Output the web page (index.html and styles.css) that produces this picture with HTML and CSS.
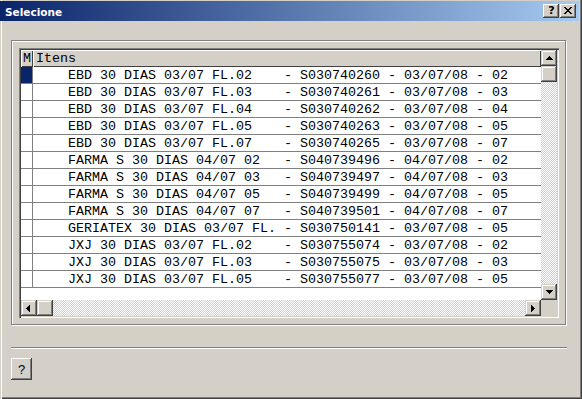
FILE: index.html
```html
<!DOCTYPE html>
<html>
<head>
<meta charset="utf-8">
<link rel="stylesheet" href="styles.css">
</head>
<body>
<div class="window">
  <div class="titlebar">
    <span class="title">Selecione</span>
    <div class="tb-buttons">
      <div class="tb-btn tb-help">?</div>
      <div class="tb-btn">
        <svg width="16" height="14" viewBox="0 0 16 14" shape-rendering="crispEdges">
          <g fill="#000">
            <rect x="4" y="3" width="2" height="1"/><rect x="10" y="3" width="2" height="1"/>
            <rect x="5" y="4" width="2" height="1"/><rect x="9" y="4" width="2" height="1"/>
            <rect x="6" y="5" width="4" height="1"/>
            <rect x="7" y="6" width="2" height="1"/>
            <rect x="6" y="7" width="4" height="1"/>
            <rect x="5" y="8" width="2" height="1"/><rect x="9" y="8" width="2" height="1"/>
            <rect x="4" y="9" width="2" height="1"/><rect x="10" y="9" width="2" height="1"/>
          </g>
        </svg>
      </div>
    </div>
  </div>
  <div class="client">
    <div class="frame">
      <div class="grid">
        <div class="list">
          <div class="head">
            <div class="hcell hm">M</div>
            <div class="hcell hi">Itens</div>
          </div>
          <div class="row sel"><div class="cm"></div><div class="ci">    EBD 30 DIAS 03/07 FL.02    - S030740260 - 03/07/08 - 02</div></div>
          <div class="row"><div class="cm"></div><div class="ci">    EBD 30 DIAS 03/07 FL.03    - S030740261 - 03/07/08 - 03</div></div>
          <div class="row"><div class="cm"></div><div class="ci">    EBD 30 DIAS 03/07 FL.04    - S030740262 - 03/07/08 - 04</div></div>
          <div class="row"><div class="cm"></div><div class="ci">    EBD 30 DIAS 03/07 FL.05    - S030740263 - 03/07/08 - 05</div></div>
          <div class="row"><div class="cm"></div><div class="ci">    EBD 30 DIAS 03/07 FL.07    - S030740265 - 03/07/08 - 07</div></div>
          <div class="row"><div class="cm"></div><div class="ci">    FARMA S 30 DIAS 04/07 02   - S040739496 - 04/07/08 - 02</div></div>
          <div class="row"><div class="cm"></div><div class="ci">    FARMA S 30 DIAS 04/07 03   - S040739497 - 04/07/08 - 03</div></div>
          <div class="row"><div class="cm"></div><div class="ci">    FARMA S 30 DIAS 04/07 05   - S040739499 - 04/07/08 - 05</div></div>
          <div class="row"><div class="cm"></div><div class="ci">    FARMA S 30 DIAS 04/07 07   - S040739501 - 04/07/08 - 07</div></div>
          <div class="row"><div class="cm"></div><div class="ci">    GERIATEX 30 DIAS 03/07 FL. - S030750141 - 03/07/08 - 05</div></div>
          <div class="row"><div class="cm"></div><div class="ci">    JXJ 30 DIAS 03/07 FL.02    - S030755074 - 03/07/08 - 02</div></div>
          <div class="row"><div class="cm"></div><div class="ci">    JXJ 30 DIAS 03/07 FL.03    - S030755075 - 03/07/08 - 03</div></div>
          <div class="row"><div class="cm"></div><div class="ci">    JXJ 30 DIAS 03/07 FL.05    - S030755077 - 03/07/08 - 05</div></div>
        </div>
        <div class="vscroll">
          <div class="sbtn">
            <svg width="16" height="16" viewBox="0 0 16 16" shape-rendering="crispEdges"><path d="M8 6h1v1h1v1h1v1h1v1H5V9h1V8h1V7h1z" fill="#000"/></svg>
          </div>
          <div class="sbtn"></div>
          <div class="track"></div>
          <div class="sbtn">
            <svg width="16" height="16" viewBox="0 0 16 16" shape-rendering="crispEdges"><path d="M5 6h7v1h-1v1h-1v1h-1v1H8V9H7V8H6V7H5z" fill="#000"/></svg>
          </div>
        </div>
        <div class="hscroll">
          <div class="sbtn">
            <svg width="16" height="16" viewBox="0 0 16 16" shape-rendering="crispEdges"><path d="M5 8h1V7h1V6h1V5h1v7H8v-1H7v-1H6V9H5z" fill="#000"/></svg>
          </div>
          <div class="sbtn"></div>
          <div class="track"></div>
          <div class="sbtn">
            <svg width="16" height="16" viewBox="0 0 16 16" shape-rendering="crispEdges"><path d="M6 5h1v1h1v1h1v1h1v1H9v1H8v1H7v1H6z" fill="#000"/></svg>
          </div>
        </div>
        <div class="corner"></div>
      </div>
    </div>
    <div class="sep"></div>
    <div class="help-btn">?</div>
  </div>
</div>
</body>
</html>
```

FILE: styles.css
```css
* {
  box-sizing: border-box;
}

html,
body {
  margin: 0;
  padding: 0;
}

body {
  width: 582px;
  height: 399px;
  overflow: hidden;
  background: #d4d0c8;
  font-family: "Liberation Sans", Arial, sans-serif;
}

.window {
  width: 582px;
  height: 399px;
  padding-top: 1px;
  background: #d4d0c8;
  box-shadow: inset 1px 0 0 #d4d0c8, inset 2px 0 0 #ffffff,
    inset -1px -1px 0 #404040, inset -2px -2px 0 #808080;
}

.titlebar {
  height: 20px;
  margin-right: 3px;
  display: flex;
  align-items: center;
  justify-content: space-between;
  padding: 0 3px 0 5px;
  background: linear-gradient(90deg, #0a246a, #a6caf0);
}

.title {
  color: #ffffff;
  font: bold 10.5px "DejaVu Sans", sans-serif;
  line-height: 20px;
  padding-top: 1px;
}

.tb-buttons {
  display: flex;
  gap: 1px;
}

.tb-btn {
  width: 16px;
  height: 14px;
  background: #d4d0c8;
  box-shadow: inset -1px -1px 0 #404040, inset 1px 1px 0 #ffffff,
    inset -2px -2px 0 #808080;
  display: flex;
}

.tb-help {
  justify-content: center;
  align-items: center;
  font: bold 11px "DejaVu Sans", sans-serif;
  color: #000;
  line-height: 14px;
  padding-left: 1px;
}

.client {
  padding-left: 11px;
}

.frame {
  margin-top: 19px;
  width: 555px;
  height: 285px;
  border: 1px solid #808080;
  box-shadow: inset 1px 1px 0 #ffffff, 1px 1px 0 #ffffff;
  padding: 7px 0 0 7px;
}

.grid {
  width: 540px;
  height: 270px;
  padding: 2px;
  display: grid;
  grid-template-columns: 520px 16px;
  grid-template-rows: 250px 16px;
  background: #d4d0c8;
  box-shadow: inset 1px 1px 0 #808080, inset 2px 2px 0 #404040,
    inset -1px -1px 0 #ffffff, inset -2px -2px 0 #d4d0c8;
}

.list {
  background: #ffffff;
  overflow: hidden;
  font-family: "Liberation Mono", "Courier New", monospace;
  font-size: 13.333px;
  color: #000;
}

.head {
  display: flex;
  height: 17px;
  background: #d4d0c8;
}

.hcell {
  height: 17px;
  line-height: 17px;
  padding-left: 3px;
  box-shadow: inset 1px 1px 0 #ffffff, inset -1px -1px 0 #404040;
  white-space: pre;
}

.hm {
  width: 12px;
  padding-left: 2px;
}

.hi {
  flex: 1;
}

.row {
  display: flex;
  height: 17px;
  border-bottom: 1px solid #808080;
}

.cm {
  width: 12px;
  border-right: 1px solid #808080;
}

.row.sel .cm {
  background: #0a246a;
}

.ci {
  flex: 1;
  padding-left: 3px;
  line-height: 17px;
  white-space: pre;
  overflow: hidden;
}

.vscroll {
  display: flex;
  flex-direction: column;
}

.hscroll {
  display: flex;
}

.sbtn {
  width: 16px;
  height: 16px;
  flex: none;
  background: #d4d0c8;
  box-shadow: inset -1px -1px 0 #404040, inset 1px 1px 0 #d4d0c8,
    inset -2px -2px 0 #808080, inset 2px 2px 0 #ffffff;
}

.sbtn svg {
  display: block;
}

.track {
  flex: 1;
  background: conic-gradient(#ffffff 0 25%, #d4d0c8 0 50%, #ffffff 0 75%, #d4d0c8 0) 0 0 / 2px 2px;
}

.corner {
  background: #d4d0c8;
}

.sep {
  margin-top: 22px;
  width: 556px;
  height: 2px;
  border-top: 1px solid #808080;
  border-bottom: 1px solid #ffffff;
}

.help-btn {
  margin-top: 9px;
  width: 21px;
  height: 22px;
  display: flex;
  align-items: center;
  justify-content: center;
  font: 13px "Liberation Sans", sans-serif;
  color: #000;
  background: #d4d0c8;
  box-shadow: inset -1px -1px 0 #404040, inset 1px 1px 0 #ffffff,
    inset -2px -2px 0 #808080;
}
```
